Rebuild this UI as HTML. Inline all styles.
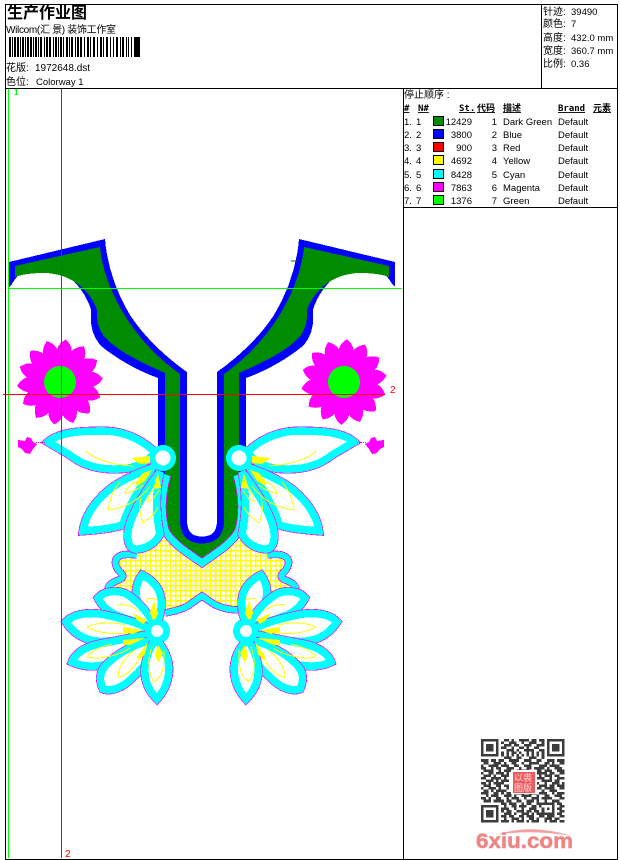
<!DOCTYPE html>
<html><head><meta charset="utf-8"><style>
html,body{margin:0;padding:0;background:#fff;width:620px;height:860px;overflow:hidden}
svg{display:block}
text{font-family:"Liberation Sans","Noto Sans CJK SC",sans-serif;font-size:9.5px;fill:#000}
.r{text-anchor:end}
.b{font-family:"DejaVu Sans Mono","Noto Sans CJK SC",monospace;font-size:9px;font-weight:bold;text-decoration:underline}
.cjk{font-size:10px}
.mg{fill:#fff;stroke:#f0f;stroke-width:9}
.cy{fill:#fff;stroke:#0ff;stroke-width:7.6}
</style></head><body>
<svg width="620" height="860" viewBox="0 0 620 860" xmlns="http://www.w3.org/2000/svg">
<defs>
<pattern id="mesh" width="5" height="5" patternUnits="userSpaceOnUse"><path d="M0 .75H5M.75 0V5" stroke="#ff0" stroke-width="1.5" fill="none"/></pattern>
<clipPath id="mc"><path d="M122,552L137,553L165,533L202,562L239,533L267,553L282,552L292,560L288,570L281,577L296,583L299,590L285,590L260,612L237,610L213,603L202,597L190,603L165,613L140,590L115,590L105,588L108,583L123,577L115,570L112,560Z"/></clipPath>
<path id="mp" d="M0,-43C7,-38 8.500,-32 7.500,-26L0,-15L-7.500,-26C-8.500,-32 -7,-38 0,-43Z" fill="#f0f"/>
<g id="mf">
<use href="#mp" transform="rotate(8)"/><use href="#mp" transform="rotate(33.7)"/><use href="#mp" transform="rotate(59.4)"/><use href="#mp" transform="rotate(85.1)"/><use href="#mp" transform="rotate(110.8)"/><use href="#mp" transform="rotate(136.5)"/><use href="#mp" transform="rotate(162.2)"/><use href="#mp" transform="rotate(187.9)"/><use href="#mp" transform="rotate(213.6)"/><use href="#mp" transform="rotate(239.3)"/><use href="#mp" transform="rotate(265)"/><use href="#mp" transform="rotate(290.7)"/><use href="#mp" transform="rotate(316.4)"/><use href="#mp" transform="rotate(342.1)"/>
<circle r="24" fill="#f0f"/>
<circle r="16" fill="#0f0"/>
</g>
<g id="halfcollar">
<path fill="#00f" d="M9,262L105,239C107,265 116,292 130,315C145,338 167,358 187,372V525H158V378C130,368 108,352 100,345C92,335 90,325 91,310C88,298 72,268 43,267C30,267 18,272 12,284L9,287Z"/>
<path fill="#008c00" d="M15,266L100,247C102,270 112,295 125,316C140,340 160,360 180,374V530H165V373C140,362 115,350 103,335C97,325 97,320 97,310C92,295 75,273 43,273C30,273 20,275 15,277Z"/>
</g>
<path id="pa" d="M48,442C60,432 80,431 103,431C125,431 142,440 155,452C148,462 135,469 118,469C95,470 80,463 70,455L48,442Z"/>
<path id="pb" d="M83,531C85,517 93,503 110,489C122,480 136,474 152,468C145,480 128,505 123,525C110,529 95,530 83,531Z"/>
<path id="pc" d="M160,472C146,490 130,515 128,532C127,545 131,550 138,549C148,548 156,542 160,534C156,515 155,495 160,472Z"/>
<path id="l1" d="M142,575C135,585 135,595 138,602C143,612 150,620 155,627C160,618 162,610 161,600C161,590 153,580 142,575Z"/>
<path id="l2" d="M98,598C104,591 118,589 128,595C140,603 150,615 155,627C140,623 125,619 114,614C106,610 101,604 98,598Z"/>
<path id="l3" d="M66,622C75,612 95,612 110,616C125,619 140,624 152,630C140,636 125,640 108,641C90,643 75,636 66,622Z"/>
<path id="l4" d="M72,662C76,651 90,645 105,643C120,640 138,636 152,634C144,646 130,658 115,662C100,667 85,668 72,662Z"/>
<path id="l5" d="M103,689C99,680 99,672 107,664C118,653 136,643 153,640C152,656 144,668 133,677C123,688 110,692 103,689Z"/>
<path id="l6" d="M157,699C148,690 144,680 145,668C146,656 150,648 155,640C162,645 168,655 169,668C169,680 165,690 157,699Z"/>
<g id="upper">
<use href="#pa" class="mg"/><use href="#pa" class="cy"/>
<use href="#pb" class="mg"/><use href="#pb" class="cy"/>
<use href="#pc" class="mg"/><use href="#pc" class="cy"/>
<path fill="none" stroke="#ff0" d="M86,451C95,460 115,465 133,466M108,510C110,498 113,490 120,482M108,510C125,508 140,500 150,486M125,494C126,488 130,485 135,482M125,494C130,492 138,490 143,485M143,523C139,512 139,505 141,498M143,523C150,518 156,513 158,507M148,502C148,497 150,493 153,490M148,502C152,500 156,496 159,490"/>
<path fill="#ff0" d="M131,458L150,456V463L140,464ZM135,483L143,473L152,470L145,481L137,486ZM153,489L158,473L161,488Z"/>
<path fill="#f0f" d="M18,440L25,441L27,437L31,438L33,442L37,444L33,449L30,454L25,453L22,449L18,447Z"/>
<path stroke="#f0f" stroke-dasharray="1 1" d="M36,442.500H45" fill="none"/>
</g>
<g id="lower">
<circle cx="157" cy="631" r="13" fill="#0ff"/>
<use href="#l1" class="mg"/><use href="#l1" class="cy"/>
<use href="#l2" class="mg"/><use href="#l2" class="cy"/>
<use href="#l3" class="mg"/><use href="#l3" class="cy"/>
<use href="#l4" class="mg"/><use href="#l4" class="cy"/>
<use href="#l5" class="mg"/><use href="#l5" class="cy"/>
<use href="#l6" class="mg"/><use href="#l6" class="cy"/>
<path fill="none" stroke="#ff0" d="M147,603C146,598 148,597 158,600M117,605C125,604 132,605 140,612M87,627C95,623 110,621 125,625M87,627C95,632 115,636 132,632M87,657C92,650 100,647 112,644M87,657C100,660 120,655 130,648M118,677C118,668 124,658 135,650M118,677C125,677 135,668 142,653M154,682C148,672 147,660 152,647M154,682C160,678 165,672 164,650"/>
<path fill="#ff0" d="M154,600L158,613L154,623L150,613ZM132,613L147,620L143,624L137,620ZM123,627L143,630L132,634L123,632ZM123,640L145,638L130,645L123,645ZM137,657L148,642L145,654L140,660ZM158,645L163,653L158,663L155,655Z"/>
<circle cx="157" cy="631" r="12" fill="#0ff"/>
<circle cx="157" cy="631" r="6" fill="#fff"/>
</g>
</defs>

<!-- embroidery -->
<g shape-rendering="crispEdges">
<rect x="100" y="530" width="205" height="90" fill="#fff"/>
<rect x="170" y="560" width="65" height="32" fill="#f0f0f0" clip-path="url(#mc)"/>
<rect x="100" y="530" width="205" height="90" fill="url(#mesh)" clip-path="url(#mc)"/>
<path fill="#008c00" d="M165,470V515C165,530 172,540 202,560C232,540 239,530 239,515V470Z"/>
<use href="#halfcollar"/>
<use href="#halfcollar" transform="translate(404,0) scale(-1,1)"/>
<path fill="#fff" stroke="#00f" stroke-width="7" d="M183.500,376V520Q183.500,540 202,540Q220.500,540 220.500,520V376"/>
<rect x="188" y="372" width="28" height="6" fill="#fff"/>
<path d="M291,261h6" stroke="#006400" fill="none"/>
<path fill="none" stroke="#f0f" stroke-width="8.600" d="M167,475C161,495 161,515 165,530C171,543 188,553 202,563C216,553 233,543 239,530C243,515 243,495 237,475"/>
<path fill="none" stroke="#0ff" stroke-width="7" d="M167,475C161,495 161,515 165,530C171,543 188,553 202,563C216,553 233,543 239,530C243,515 243,495 237,475"/>
<g fill="none" stroke="#f0f" stroke-width="7.600">
<path d="M137,555C130,554 122,554 118,557C114,560 115,566 119,571C124,575 125,578 116,581C109,584 107,588 109,591"/>
<path d="M267,555C274,554 282,554 286,557C290,560 289,566 285,571C280,575 279,578 288,581C295,584 297,588 295,591"/>
<path d="M165,613C175,611 185,609 192,603L202,596L212,603C220,608 230,610 240,610"/>
</g>
<g fill="none" stroke="#0ff" stroke-width="6">
<path d="M137,555C130,554 122,554 118,557C114,560 115,566 119,571C124,575 125,578 116,581C109,584 107,588 109,591"/>
<path d="M267,555C274,554 282,554 286,557C290,560 289,566 285,571C280,575 279,578 288,581C295,584 297,588 295,591"/>
<path d="M165,613C175,611 185,609 192,603L202,596L212,603C220,608 230,610 240,610"/>
</g>
<use href="#mf" transform="translate(60,382)"/>
<use href="#mf" transform="translate(344,382) rotate(-4)"/>
<use href="#upper"/>
<use href="#upper" transform="translate(402,0) scale(-1,1)"/>
<circle cx="163" cy="458" r="13" fill="#0ff"/><circle cx="163" cy="458" r="7.500" fill="#fff"/>
<circle cx="239" cy="458" r="13" fill="#0ff"/><circle cx="239" cy="458" r="7.500" fill="#fff"/>
<use href="#lower"/>
<use href="#lower" transform="translate(403,0) scale(-1,1)"/>

<!-- guide lines -->
<path d="M8.500,89V858" stroke="#0f0" fill="none"/>
<path d="M9,288.500H402" stroke="#0f0" fill="none"/>
<path d="M61.500,89V858" stroke="#f00" fill="none"/>
<path d="M3,394.500H385" stroke="#f00" fill="none"/>

<!-- frame -->
<path fill="none" stroke="#000" d="M5.500,4.500H617.500V859.500H5.500ZM5.500,88.500H617.500M541.500,4.500V88.500M403.500,88.500V859.500M403.500,207.500H617.500"/>

<!-- barcode -->
<path stroke="#000" stroke-width="2" fill="none" d="M10,37v20M15,37v20M18,37v20M23,37v20M28,37v20M31,37v20M36,37v20M41,37v20M47,37v20M50,37v20M56,37v20M61,37v20M67,37v20M72,37v20M78,37v20M81,37v20M88,37v20M94,37v20M101,37v20M107,37v20M117,37v20M123,37v20M135,37v20M137,37v20M139,37v20"/>
<path stroke="#000" stroke-width="1" fill="none" d="M12.500,37v20M20.500,37v20M25.500,37v20M33.500,37v20M38.500,37v20M44.500,37v20M53.500,37v20M58.500,37v20M63.500,37v20M69.500,37v20M75.500,37v20M84.500,37v20M90.500,37v20M97.500,37v20M103.500,37v20M110.500,37v20M113.500,37v20M120.500,37v20M126.500,37v20M128.500,37v20M131.500,37v20"/>

<!-- swatches -->
<g stroke="#000">
<rect x="433.500" y="116.500" width="10" height="9" fill="#008c00"/>
<rect x="433.500" y="129.500" width="10" height="9" fill="#00f"/>
<rect x="433.500" y="142.500" width="10" height="9" fill="#f00"/>
<rect x="433.500" y="155.500" width="10" height="9" fill="#ff0"/>
<rect x="433.500" y="169.500" width="10" height="9" fill="#0ff"/>
<rect x="433.500" y="182.500" width="10" height="9" fill="#f0f"/>
<rect x="433.500" y="195.500" width="10" height="9" fill="#0f0"/>
</g>

<!-- QR -->
<g transform="translate(481,739) scale(2.530)" fill="none" stroke="#3c3c3c" stroke-width="1">
<path d="M.5,.5h6v6h-6zM26.500,.5h6v6h-6zM.5,26.500h6v6h-6z"/>
<path stroke-width="3" d="M2,3.500h3M28,3.500h3M2,29.500h3"/>
<path d="M9,.5h2M12,.5h1M15,.5h4M20,.5h2M23,.5h2M8,1.500h1M11,1.500h3M16,1.500h1M19,1.500h3M24,1.500h1M9,2.500h3M13,2.500h2M17,2.500h3M22,2.500h3M8,3.500h2M12,3.500h1M15,3.500h2M18,3.500h1M21,3.500h2M10,4.500h3M14,4.500h1M17,4.500h4M23,4.500h2M8,5.500h1M10,5.500h1M12,5.500h2M15,5.500h1M18,5.500h1M20,5.500h1M22,5.500h1M24,5.500h1M8,6.500h1M10,6.500h1M12,6.500h1M14,6.500h1M16,6.500h1M18,6.500h1M20,6.500h1M22,6.500h1M24,6.500h1M9,7.500h3M14,7.500h2M19,7.500h3M24,7.500h1"/>
<path d="M0,8.500h3M4,8.500h2M7,8.500h2M11,8.500h4M17,8.500h3M22,8.500h2M26,8.500h3M30,8.500h3M1,9.500h2M5,9.500h3M9,9.500h1M12,9.500h2M16,9.500h1M19,9.500h4M25,9.500h2M28,9.500h1M31,9.500h2M0,10.500h1M3,10.500h4M8,10.500h3M13,10.500h2M17,10.500h3M23,10.500h3M27,10.500h4M0,11.500h2M4,11.500h1M6,11.500h2M10,11.500h3M15,11.500h1M18,11.500h2M21,11.500h4M26,11.500h1M29,11.500h3M1,12.500h4M7,12.500h1M9,12.500h3M14,12.500h5M22,12.500h2M25,12.500h3M30,12.500h3M0,13.500h1M3,13.500h2M6,13.500h3M10,13.500h1M22,13.500h4M27,13.500h2M31,13.500h2M1,14.500h3M5,14.500h1M8,14.500h3M23,14.500h1M25,14.500h3M29,14.500h2M0,15.500h2M4,15.500h4M9,15.500h1M22,15.500h3M27,15.500h1M30,15.500h3M2,16.500h3M6,16.500h1M8,16.500h3M24,16.500h4M29,16.500h2M0,17.500h2M3,17.500h1M5,17.500h4M22,17.500h1M25,17.500h1M28,17.500h3M32,17.500h1M1,18.500h3M6,18.500h2M9,18.500h2M23,18.500h3M27,18.500h2M30,18.500h3M0,19.500h1M3,19.500h3M7,19.500h1M10,19.500h1M22,19.500h2M25,19.500h4M31,19.500h2M1,20.500h2M4,20.500h1M6,20.500h4M24,20.500h1M27,20.500h3M0,21.500h3M5,21.500h2M8,21.500h1M10,21.500h2M14,21.500h3M19,21.500h3M23,21.500h3M28,21.500h1M30,21.500h3M2,22.500h1M4,22.500h3M9,22.500h3M13,22.500h1M16,22.500h4M22,22.500h1M25,22.500h2M29,22.500h3M0,23.500h2M3,23.500h1M6,23.500h2M10,23.500h1M12,23.500h3M17,23.500h1M20,23.500h3M24,23.500h4M31,23.500h2M1,24.500h3M5,24.500h4M10,24.500h2M14,24.500h2M18,24.500h3M22,24.500h1M25,24.500h1M28,24.500h3"/>
<path d="M8,25.500h2M11,25.500h3M16,25.500h1M18,25.500h2M22,25.500h7M30,25.500h2M9,26.500h1M12,26.500h2M15,26.500h3M20,26.500h2M23,26.500h1M28,26.500h1M31,26.500h2M8,27.500h3M13,27.500h1M16,27.500h1M19,27.500h3M24,27.500h1M26,27.500h1M28,27.500h1M30,27.500h2M8,28.500h1M10,28.500h2M14,28.500h3M18,28.500h2M21,28.500h2M24,28.500h1M28,28.500h1M31,28.500h2M9,29.500h3M13,29.500h1M16,29.500h3M20,29.500h1M22,29.500h7M30,29.500h2M8,30.500h2M11,30.500h2M15,30.500h2M18,30.500h3M23,30.500h2M26,30.500h3M31,30.500h2M9,31.500h1M12,31.500h3M16,31.500h1M19,31.500h2M22,31.500h1M25,31.500h3M29,31.500h2M8,32.500h3M12,32.500h1M14,32.500h3M18,32.500h1M20,32.500h3M25,32.500h1M27,32.500h3M31,32.500h2"/>
</g>
<rect x="511" y="770" width="26" height="24" fill="#fff"/>
<rect x="513" y="772" width="22" height="21" fill="#ec5a60"/>
</g>

<text x="514" y="781" style="font-size:9px;fill:#ffd9d9">以裘</text>
<text x="514" y="791" style="font-size:9px;fill:#ffd9d9">图版</text>
<path d="M496,835Q530,823 572,836Q530,829 496,835Z" fill="#f4a0a0"/>
<text x="476" y="848" textLength="97" lengthAdjust="spacingAndGlyphs" style="font-size:21px;font-weight:bold;fill:#ef8585;stroke:#ef8585;stroke-width:.5">6xiu.com</text>

<!-- header -->
<text x="7" y="18" style="font-size:16px;font-weight:bold;font-family:'Noto Sans CJK SC',sans-serif">生产作业图</text>
<text x="6" y="33" class="cjk" textLength="110">Wilcom(汇 景) 装饰工作室</text>
<text x="6" y="71" class="cjk">花版:</text><text x="35" y="71" class="cjk">1972648.dst</text>
<text x="6" y="85" class="cjk">色位:</text><text x="36" y="85" style="font-size:9.500px">Colorway 1</text>
<text x="14" y="95" style="font-size:8px;font-weight:bold;fill:#0f0">1</text>
<text x="65" y="857" style="font-size:10px;fill:#f00">2</text>
<text x="390" y="393" style="font-size:10px;fill:#f00">2</text>

<text x="543" y="15" class="cjk">针迹:</text><text x="571" y="15">39490</text>
<text x="543" y="27" class="cjk">颜色:</text><text x="571" y="27">7</text>
<text x="543" y="41" class="cjk">高度:</text><text x="571" y="41">432.0 mm</text>
<text x="543" y="54" class="cjk">宽度:</text><text x="571" y="54">360.7 mm</text>
<text x="543" y="67" class="cjk">比例:</text><text x="571" y="67">0.36</text>

<!-- table -->
<text x="404" y="98" class="cjk">停止顺序 :</text>
<text x="404" y="111" class="b">#</text>
<text x="418" y="111" class="b">N#</text>
<text x="459" y="111" class="b">St.</text>
<text x="477" y="111" class="b">代码</text>
<text x="503" y="111" class="b">描述</text>
<text x="558" y="111" class="b">Brand</text>
<text x="593" y="111" class="b">元素</text>

<text x="404" y="125">1.</text><text x="416" y="125">1</text><text x="472" y="125" class="r">12429</text><text x="497" y="125" class="r">1</text><text x="503" y="125">Dark Green</text><text x="558" y="125">Default</text>
<text x="404" y="138">2.</text><text x="416" y="138">2</text><text x="472" y="138" class="r">3800</text><text x="497" y="138" class="r">2</text><text x="503" y="138">Blue</text><text x="558" y="138">Default</text>
<text x="404" y="151">3.</text><text x="416" y="151">3</text><text x="472" y="151" class="r">900</text><text x="497" y="151" class="r">3</text><text x="503" y="151">Red</text><text x="558" y="151">Default</text>
<text x="404" y="164">4.</text><text x="416" y="164">4</text><text x="472" y="164" class="r">4692</text><text x="497" y="164" class="r">4</text><text x="503" y="164">Yellow</text><text x="558" y="164">Default</text>
<text x="404" y="178">5.</text><text x="416" y="178">5</text><text x="472" y="178" class="r">8428</text><text x="497" y="178" class="r">5</text><text x="503" y="178">Cyan</text><text x="558" y="178">Default</text>
<text x="404" y="191">6.</text><text x="416" y="191">6</text><text x="472" y="191" class="r">7863</text><text x="497" y="191" class="r">6</text><text x="503" y="191">Magenta</text><text x="558" y="191">Default</text>
<text x="404" y="204">7.</text><text x="416" y="204">7</text><text x="472" y="204" class="r">1376</text><text x="497" y="204" class="r">7</text><text x="503" y="204">Green</text><text x="558" y="204">Default</text>
</svg>
</body></html>
